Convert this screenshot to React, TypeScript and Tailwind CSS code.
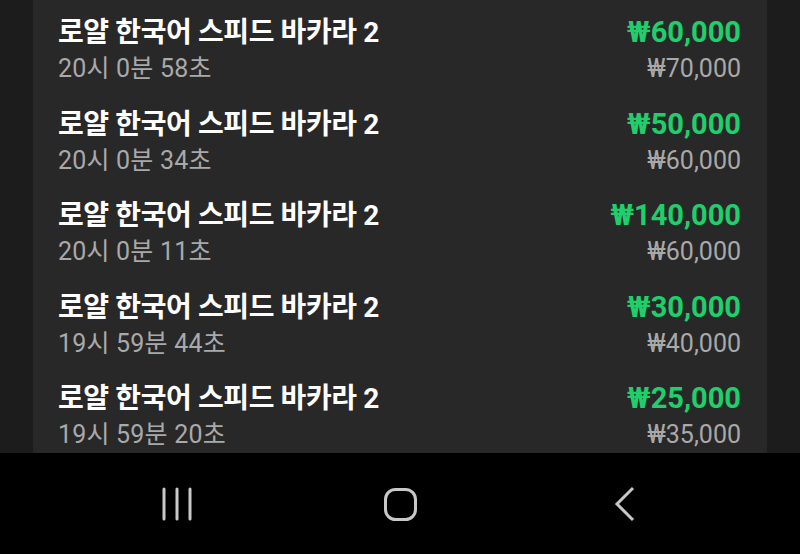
import React from "react";

const rows = [
  { time: "20시 0분 58초", win: "₩60,000", bet: "₩70,000" },
  { time: "20시 0분 34초", win: "₩50,000", bet: "₩60,000" },
  { time: "20시 0분 11초", win: "₩140,000", bet: "₩60,000" },
  { time: "19시 59분 44초", win: "₩30,000", bet: "₩40,000" },
  { time: "19시 59분 20초", win: "₩25,000", bet: "₩35,000" },
];

export default function App() {
  return (
    <div
      className="w-[800px] h-[554px] flex flex-col bg-black overflow-hidden"
      style={{ fontFamily: 'Roboto, "Noto Sans CJK KR", sans-serif' }}
    >
      <div className="h-[453px] bg-[#1c1c1c] px-[33px] overflow-hidden">
        <div className="w-[734px] h-full bg-[#282828] flex flex-col">
          {rows.map((r, i) => (
            <div key={i} className="h-[91.5px] shrink-0 flex justify-between pl-[25px] pr-[26px] pt-[14px]">
              <div className="flex flex-col">
                <div className="h-[37px] leading-[37px] text-[28px] font-bold text-white tracking-[-0.4px]">
                  로얄 한국어 스피드 바카라 2
                </div>
                <div className="h-[36px] leading-[36px] text-[25px] text-[#a9a9a9] tracking-[0.2px]">{r.time}</div>
              </div>
              <div className="flex flex-col items-end">
                <div className="h-[37px] leading-[37px] text-[29px] font-bold text-[#1fcf6b]">{r.win}</div>
                <div className="h-[36px] leading-[36px] text-[25px] text-[#a9a9a9]">{r.bet}</div>
              </div>
            </div>
          ))}
        </div>
      </div>
      <div className="flex-1 bg-black relative">
        <svg width="800" height="101" viewBox="0 0 800 101" className="block">
          <g stroke="#c8c8c8" strokeWidth="3" strokeLinecap="round" fill="none">
            <line x1="164" y1="36" x2="164" y2="66" />
            <line x1="177" y1="36" x2="177" y2="66" />
            <line x1="190" y1="36" x2="190" y2="66" />
            <rect x="385.5" y="36.5" width="30" height="30" rx="10" />
            <polyline points="633,35 617,51 633,67" strokeLinecap="butt" strokeLinejoin="miter" />
          </g>
        </svg>
      </div>
    </div>
  );
}
